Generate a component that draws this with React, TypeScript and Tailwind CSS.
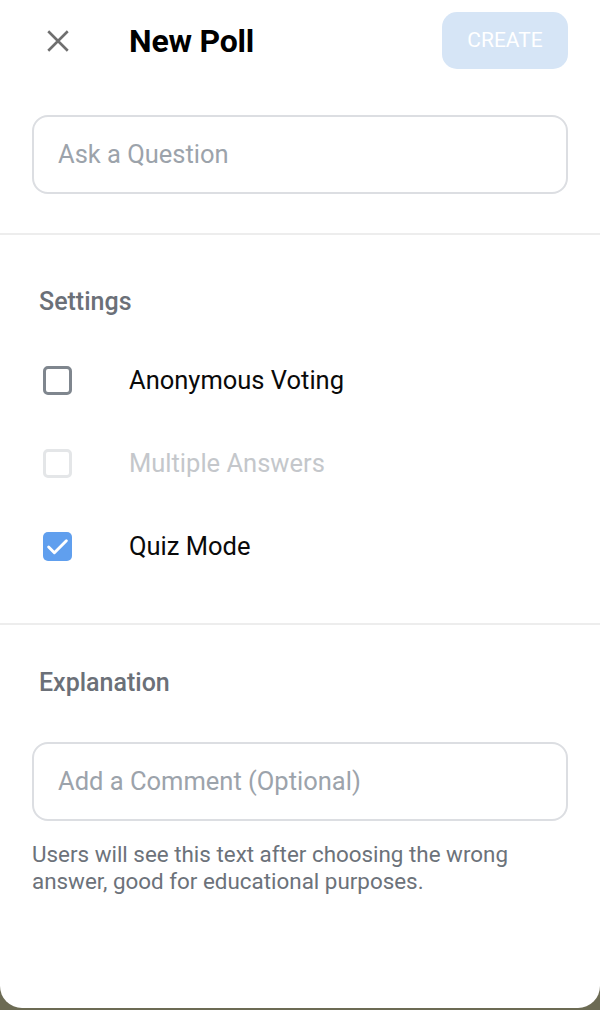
import React from "react";

function Check({ state }: { state: "off" | "disabled" | "on" }) {
  if (state === "on") {
    return (
      <div className="w-[29px] h-[29px] rounded-[5px] bg-[#609fee] flex items-center justify-center">
        <svg width="25" height="25" viewBox="0 0 24 24" fill="none">
          <path d="M3.5 12.5l5.5 5.5L20.5 6.5" stroke="#fff" strokeWidth="2.8" strokeLinecap="round" strokeLinejoin="round" />
        </svg>
      </div>
    );
  }
  return (
    <div
      className={
        "w-[29px] h-[29px] rounded-[5px] border-[3px] " +
        (state === "off" ? "border-[#7f868e]" : "border-[#e4e6e8]")
      }
    />
  );
}

function Row({ label, state }: { label: string; state: "off" | "disabled" | "on" }) {
  return (
    <div className="flex items-center h-[83px]">
      <div className="w-[129px] pl-[43px] flex items-center">
        <Check state={state} />
      </div>
      <span
        className={
          "text-[25.5px] " + (state === "disabled" ? "text-[#c4c7cb]" : "text-[#0a0a0a]")
        }
      >
        {label}
      </span>
    </div>
  );
}

export default function App() {
  return (
    <div className="w-[600px] h-[1010px] bg-[#6c6b54]" style={{ fontFamily: "Roboto, 'Noto Sans', sans-serif" }}>
      <div className="w-full h-[1008px] bg-white rounded-b-[22px] flex flex-col">
        <div className="flex items-center h-[82px] pr-[32px]">
          <div className="w-[117px] flex justify-center">
            <svg width="26" height="26" viewBox="0 0 24 24" fill="none" className="ml-[-2px]">
              <path d="M3 3l18 18M21 3L3 21" stroke="#6f6f6f" strokeWidth="2.4" strokeLinecap="butt" />
            </svg>
          </div>
          <div className="ml-[12px] text-[32px] font-bold text-black tracking-[-0.2px]">New Poll</div>
          <div className="ml-auto mt-[-1px] w-[126px] h-[57px] rounded-[15px] bg-[#d6e5f6] flex items-center justify-center text-white text-[21px]">
            CREATE
          </div>
        </div>
        <div className="px-[32px] pt-[33px] pb-[39px]">
          <div className="h-[79px] rounded-[16px] border-2 border-[#dcdee2] flex items-center px-[24px] text-[25.5px] text-[#9ca3ab]">
            Ask a Question
          </div>
        </div>
        <div className="h-[2px] bg-[#ededed]" />
        <div className="pt-[51px] pl-[39px] text-[25px] leading-[32px] font-medium text-[#6b7078]">Settings</div>
        <div className="pt-[21px] pb-[35px]">
          <Row label="Anonymous Voting" state="off" />
          <Row label="Multiple Answers" state="disabled" />
          <Row label="Quiz Mode" state="on" />
        </div>
        <div className="h-[2px] bg-[#ededed]" />
        <div className="pt-[42px] pl-[39px] text-[25px] leading-[32px] font-medium text-[#6b7078]">Explanation</div>
        <div className="px-[32px] pt-[43px]">
          <div className="h-[79px] rounded-[16px] border-2 border-[#dcdee2] flex items-center px-[24px] text-[25.5px] text-[#9ca3ab]">
            Add a Comment (Optional)
          </div>
        </div>
        <div className="px-[32px] pt-[20px] text-[22.4px] leading-[27px] text-[#6c727a]">
          Users will see this text after choosing the wrong
          <br />
          answer, good for educational purposes.
        </div>
      </div>
    </div>
  );
}
